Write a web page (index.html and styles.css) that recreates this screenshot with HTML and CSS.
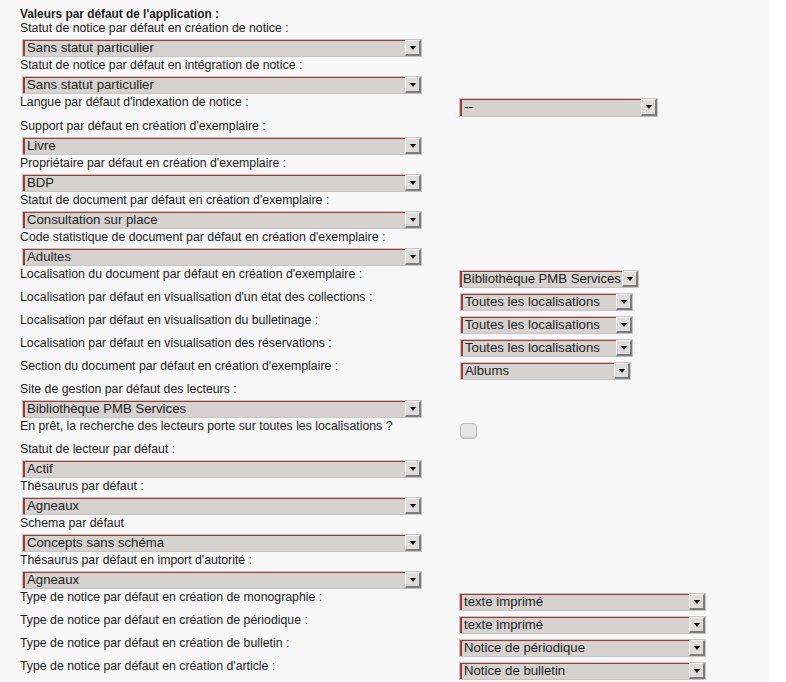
FILE: index.html
```html
<!DOCTYPE html>
<html lang="fr">
<head>
<meta charset="utf-8">
<title>Valeurs par défaut</title>
<link rel="stylesheet" href="styles.css">
</head>
<body>
<div class="page">
  <div class="title">Valeurs par défaut de l'application :</div>

  <div class="block">
    <div class="lab">Statut de notice par défaut en création de notice :</div>
    <div class="sel full"><span class="v">Sans statut particulier</span><span class="b"></span></div>
  </div>
  <div class="block">
    <div class="lab">Statut de notice par défaut en intégration de notice :</div>
    <div class="sel full"><span class="v">Sans statut particulier</span><span class="b"></span></div>
  </div>
  <div class="row tall">
    <div class="lab col">Langue par défaut d'indexation de notice :</div>
    <div class="ctl"><div class="sel w-lang"><span class="v">--</span><span class="b"></span></div></div>
  </div>
  <div class="block">
    <div class="lab">Support par défaut en création d'exemplaire :</div>
    <div class="sel full"><span class="v">Livre</span><span class="b"></span></div>
  </div>
  <div class="block">
    <div class="lab">Propriétaire par défaut en création d'exemplaire :</div>
    <div class="sel full"><span class="v">BDP</span><span class="b"></span></div>
  </div>
  <div class="block">
    <div class="lab">Statut de document par défaut en création d'exemplaire :</div>
    <div class="sel full"><span class="v">Consultation sur place</span><span class="b"></span></div>
  </div>
  <div class="block">
    <div class="lab">Code statistique de document par défaut en création d'exemplaire :</div>
    <div class="sel full"><span class="v">Adultes</span><span class="b"></span></div>
  </div>
  <div class="row">
    <div class="lab col">Localisation du document par défaut en création d'exemplaire :</div>
    <div class="ctl"><div class="sel w-biblio"><span class="v tight">Bibliothèque PMB Services</span><span class="b"></span></div></div>
  </div>
  <div class="row">
    <div class="lab col">Localisation par défaut en visualisation d'un état des collections :</div>
    <div class="ctl"><div class="sel w-toutes"><span class="v">Toutes les localisations</span><span class="b"></span></div></div>
  </div>
  <div class="row">
    <div class="lab col">Localisation par défaut en visualisation du bulletinage :</div>
    <div class="ctl"><div class="sel w-toutes"><span class="v">Toutes les localisations</span><span class="b"></span></div></div>
  </div>
  <div class="row">
    <div class="lab col">Localisation par défaut en visualisation des réservations :</div>
    <div class="ctl"><div class="sel w-toutes"><span class="v">Toutes les localisations</span><span class="b"></span></div></div>
  </div>
  <div class="row">
    <div class="lab col">Section du document par défaut en création d'exemplaire :</div>
    <div class="ctl"><div class="sel w-albums"><span class="v">Albums</span><span class="b"></span></div></div>
  </div>
  <div class="block">
    <div class="lab">Site de gestion par défaut des lecteurs :</div>
    <div class="sel full"><span class="v">Bibliothèque PMB Services</span><span class="b"></span></div>
  </div>
  <div class="row">
    <div class="lab col">En prêt, la recherche des lecteurs porte sur toutes les localisations ?</div>
    <div class="ctl chk-cell"><input type="checkbox" class="chk"></div>
  </div>
  <div class="block">
    <div class="lab">Statut de lecteur par défaut :</div>
    <div class="sel full"><span class="v">Actif</span><span class="b"></span></div>
  </div>
  <div class="block">
    <div class="lab">Thésaurus par défaut :</div>
    <div class="sel full"><span class="v">Agneaux</span><span class="b"></span></div>
  </div>
  <div class="block">
    <div class="lab">Schema par défaut</div>
    <div class="sel full"><span class="v">Concepts sans schéma</span><span class="b"></span></div>
  </div>
  <div class="block">
    <div class="lab">Thésaurus par défaut en import d'autorité :</div>
    <div class="sel full"><span class="v">Agneaux</span><span class="b"></span></div>
  </div>
  <div class="row">
    <div class="lab col">Type de notice par défaut en création de monographie :</div>
    <div class="ctl"><div class="sel w-type"><span class="v">texte imprimé</span><span class="b"></span></div></div>
  </div>
  <div class="row">
    <div class="lab col">Type de notice par défaut en création de périodique :</div>
    <div class="ctl"><div class="sel w-type"><span class="v">texte imprimé</span><span class="b"></span></div></div>
  </div>
  <div class="row">
    <div class="lab col">Type de notice par défaut en création de bulletin :</div>
    <div class="ctl"><div class="sel w-type"><span class="v">Notice de périodique</span><span class="b"></span></div></div>
  </div>
  <div class="row">
    <div class="lab col">Type de notice par défaut en création d'article :</div>
    <div class="ctl"><div class="sel w-type"><span class="v">Notice de bulletin</span><span class="b"></span></div></div>
  </div>
</div>
</body>
</html>
```

FILE: styles.css
```css
html, body {
  margin: 0;
  padding: 0;
  background: #ffffff;
}
body {
  font-family: "Liberation Sans", Arial, sans-serif;
  color: #1c1c1c;
  font-size: 12.3px;
  line-height: 14px;
}
.page {
  width: 769px;
  min-height: 682px;
  box-sizing: border-box;
  background: #f7f7f7;
  padding: 7px 0 0 20px;
}
.title {
  font-weight: bold;
  font-size: 11.85px;
  height: 14px;
}
.block {
  display: flex;
  flex-direction: column;
  padding-bottom: 1px;
}
.lab {
  height: 14px;
  white-space: nowrap;
}
.block .sel {
  margin-top: 4px;
}
.row {
  display: flex;
  height: 23px;
}
.row.tall {
  height: 24px;
}
.col {
  width: 439px;
}
.ctl {
  padding-top: 3px;
}
.sel {
  display: flex;
  box-sizing: border-box;
  height: 18px;
  border: 1px solid #c4c4c4;
  background: #d6d2cf;
  font-size: 13.2px;
  line-height: 14px;
  color: #222;
}
.tall .sel {
  height: 19px;
}
.sel .v {
  flex: 1;
  min-width: 0;
  overflow: hidden;
  white-space: nowrap;
  border-top: 1px solid #9e3a3c;
  border-left: 2px solid #9e3a3c;
  padding-left: 2px;
}
.sel .v.tight {
  padding-left: 1px;
  letter-spacing: -0.05px;
}
.sel .b {
  flex: none;
  width: 13px;
  background: #dedcda;
  border-top: 1px solid #f4f4f4;
  border-left: 1px solid #f4f4f4;
  border-right: 2px solid #7c7c7c;
  border-bottom: 2px solid #7c7c7c;
  display: flex;
  align-items: center;
  justify-content: center;
}
.sel .b::after {
  content: "";
  width: 0;
  height: 0;
  border-left: 3.5px solid transparent;
  border-right: 3.5px solid transparent;
  border-top: 4px solid #000;
}
.full {
  width: 400px;
  margin-left: 2px;
}
.w-lang { width: 199px; }
.w-biblio { width: 180px; }
.w-toutes { width: 173px; margin-left: 1px; }
.w-albums { width: 171px; margin-left: 1px; }
.w-type { width: 247px; }
.chk-cell {
  padding-top: 4px;
  padding-left: 1px;
}
.chk {
  appearance: none;
  -webkit-appearance: none;
  margin: 0;
  width: 17px;
  height: 16px;
  box-sizing: border-box;
  border: 1px solid #bdbdbd;
  border-radius: 4px;
  background: #e6e6e6;
  box-shadow: inset 0 -1px 1px #d0d0d0;
  display: block;
}
```
